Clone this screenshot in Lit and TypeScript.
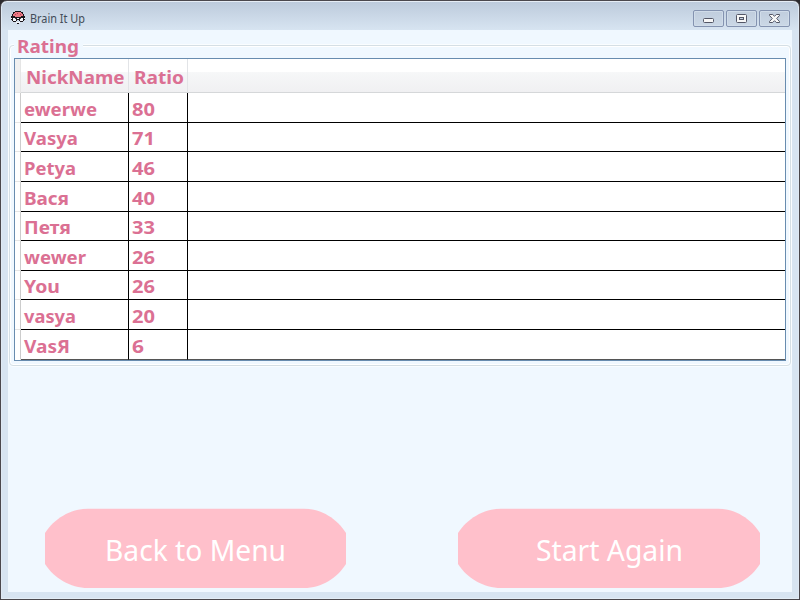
import { LitElement, html, css, svg } from "lit";
import { customElement, property } from "lit/decorators.js";

/** One line of text stretched to a given advance width, so labels keep the metrics of the UI font. */
@customElement("fit-label")
class FitLabel extends LitElement {
  @property() text = "";
  @property({ type: Number }) w = 10;
  @property({ type: Number }) h = 28;
  @property({ type: Number }) base = 20;
  static styles = css`
    :host { display: block; flex: none; }
    .line { display: block; overflow: visible; fill: currentColor; }
  `;
  render() {
    return html`<svg class="line" width=${this.w} height=${this.h}>
      ${svg`<text x="0" y=${this.base} textLength=${this.w} lengthAdjust="spacingAndGlyphs">${this.text}</text>`}
    </svg>`;
  }
}

const ROWS: [string, number, string, number, number][] = [
  ["ewerwe", 73, "80", 23, 30],
  ["Vasya", 54, "71", 23, 29],
  ["Petya", 52, "46", 23, 30],
  ["Вася", 45, "40", 23, 30],
  ["Петя", 47, "33", 23, 29],
  ["wewer", 62, "26", 23, 30],
  ["You", 36, "26", 23, 29],
  ["vasya", 52, "20", 23, 30],
  ["VasЯ", 46, "6", 12, 30],
];

@customElement("app-root")
class AppRoot extends LitElement {
  static styles = css`
    :host { display: block; width: 800px; height: 600px; overflow: hidden; background: #2c2a2e;
      font-family: "Noto Sans", "Open Sans", sans-serif; }
    * { box-sizing: border-box; }
    .window { width: 800px; height: 600px; border: 1px solid #4b484d; border-radius: 7px 7px 0 0;
      background: linear-gradient(#bccadb, #d7e4f1 29px); display: flex; flex-direction: column;
      padding: 0 7px 7px; box-shadow: inset 0 1px 0 #e6edf5, inset 1px 0 0 #dfe9f4, inset -1px 0 0 #dfe9f4, inset 0 -1px 0 #e3edf6; }
    .title { height: 29px; flex: none; display: flex; align-items: flex-start; padding-left: 2px; }
    .logo { margin-top: 9px; display: block; }
    .caption { font-size: 12px; color: #434c58; margin: 9px auto 0 4px; }
    .ctl { width: 31px; height: 17px; margin: 9px 0 0 2px; border: 1px solid #8493b0; border-radius: 2px;
      background: linear-gradient(#c0cddd, #cbd8e6); box-shadow: inset 0 0 0 1px #d0dce9; display: grid; place-items: center; }
    .ctl:last-child { margin-right: 2px; }
    .ctl svg { display: block; }
    .client { flex: 1; background: #f0f8ff; display: flex; flex-direction: column; padding: 0 1px; }
    .group { margin: 15px 0 0; height: 321px; border: 1px solid #d5dfe5; border-radius: 4px; flex: none;
      box-shadow: inset 0 0 0 1px #fff, 0 0 0 1px #fafdff; padding: 0 4px; display: flex; flex-direction: column; }
    .legend { height: 12px; width: 68px; margin-left: 0; flex: none; }
    .legend fit-label { background: #f0f8ff; margin-top: -14px; padding: 0 4px 0 3px; width: 69px; height: 26px; }
    .bold { font-size: 18.5px; font-weight: 700; color: #db7093; }
    .grid { height: 303px; border: 1px solid #688caf; background: #fff; display: flex; flex-direction: column; flex: none; }
    .head { height: 34px; display: grid; grid-template-columns: 6px 108px 59px 1fr; flex: none; }
    .head > div { background: linear-gradient(#fff 0, #fff 40%, #f6f7f8 41%, #f0f0f2); border-bottom: 1px solid #d5d7d9;
      border-right: 1px solid #e2e4e7; }
    .head > .corner { background: #f0f0f0; border-color: #e5e5e5; }
    .head > .rest { border-right: 0; }
    .head fit-label { margin: 4px 0 0 5px; }
    .row { display: grid; grid-template-columns: 6px 108px 59px 1fr; flex: none; }
    .row > div { border-bottom: 1px solid #000; border-right: 1px solid #000; padding-left: 3px; }
    .row > .mark { border-right-color: #ccc; border-bottom-color: #e5e5e5; }
    .row > .rest { border-right: 0; }
    .row:last-child > div { border-bottom-color: #555; }
    .row:last-child > .mark { border-bottom-color: #fff; }
    .actions { margin-top: 142px; display: flex; gap: 112px; padding-left: 36px; }
    .pill { border: 0; padding: 0; width: 301px; height: 81px; background: none; color: #fff; display: grid; font: 29px "Noto Sans", "Open Sans", sans-serif; }
    .pill + .pill { width: 302px; }
    .pill > * { grid-area: 1 / 1; }
    .shape { width: 100%; height: 81px; display: block; }
    .pill fit-label { margin: 23px 0 0 60px; }
    .pill + .pill fit-label { margin-left: 78px; }
  `;

  private pill(text: string, w: number) {
    return html`<button class="pill">
      <svg class="shape" viewBox="0 0 301 81" preserveAspectRatio="none"><path fill="#ffc0cb" d="M0 25C9 11 25 .7 43 .7H259C277 .7 292 11 301 25V56C292 70 277 80 259 80H43C25 80 9 70 0 56Z"/></svg>
      <fit-label .text=${text} .w=${w} .h=${40} .base=${30}></fit-label>
    </button>`;
  }

  render() {
    return html`<div class="window">
      <div class="title">
        <svg class="logo" width="16" height="16" shape-rendering="crispEdges">
          <path fill="#1b151b" d="M5 1h6v1h2v2h1v2h1v4h-1v1h-1v1h-3v-1H9v-1H7v1H6v1H3v-1H2v-1H1V6h1V4h1V2h2z"/>
          <path fill="#ec7884" d="M5 2h6v1h1v1h1v2h-2v1H5V6H3V4h1V3h1z"/>
          <path fill="#a94556" d="M7 3h1v1H7zM5 4h1v1H5zM10 4h1v1h-1z"/>
          <path fill="#f4f7fb" d="M3 8h3v3H3zM10 8h3v3h-3zM1 8h1v1H1zM14 8h1v1h-1zM7 8h2v1H7z"/>
          <path fill="#444" d="M5 8h1v1H5zM10 8h1v1h-1z"/>
          <path fill="#f4f7fb" d="M6 12h4v1H6z"/>
          <path fill="#1b151b" d="M7 13h2v1H7z"/>
        </svg>
        <fit-label class="caption" .text=${"Brain It Up"} .w=${55} .h=${18} .base=${13}></fit-label>
        <div class="ctl"><svg width="13" height="13"><rect x="1.5" y="6.5" width="10" height="4" rx="1" fill="#f7f7f7" stroke="#535666"/></svg></div>
        <div class="ctl"><svg width="13" height="13"><rect x="1.5" y="2.5" width="10" height="8" rx="1" fill="#f7f7f7" stroke="#535666"/><rect x="4.5" y="5.5" width="4" height="2" fill="#c5d2e1" stroke="#535666"/></svg></div>
        <div class="ctl"><svg width="13" height="13"><path fill="#f7f7f7" stroke="#535666" stroke-linejoin="round" d="M1.5 2.5h3.2l1.8 1.8 1.8-1.8h3.2v1L8.7 6.5l2.8 3v1H8.3L6.5 8.7l-1.8 1.8H1.5v-1l2.8-3-2.8-3z"/></svg></div>
      </div>
      <div class="client">
        <div class="group bold">
          <div class="legend"><fit-label .text=${"Rating"} .w=${62} .h=${26} .base=${21}></fit-label></div>
          <div class="grid">
            <div class="head">
              <div class="corner"></div>
              <div><fit-label .text=${"NickName"} .w=${98.5} .h=${28} .base=${21}></fit-label></div>
              <div><fit-label .text=${"Ratio"} .w=${50} .h=${28} .base=${21}></fit-label></div>
              <div class="rest"></div>
            </div>
            ${ROWS.map(([name, nw, ratio, rw, h]) => html`<div class="row">
              <div class="mark"></div>
              <div><fit-label .text=${name} .w=${nw} .h=${h - 1} .base=${h - 7}></fit-label></div>
              <div><fit-label .text=${ratio} .w=${rw} .h=${h - 1} .base=${h - 7}></fit-label></div>
              <div class="rest"></div>
            </div>`)}
          </div>
        </div>
        <div class="actions">${this.pill("Back to Menu", 181)}${this.pill("Start Again", 147)}</div>
      </div>
    </div>`;
  }
}
